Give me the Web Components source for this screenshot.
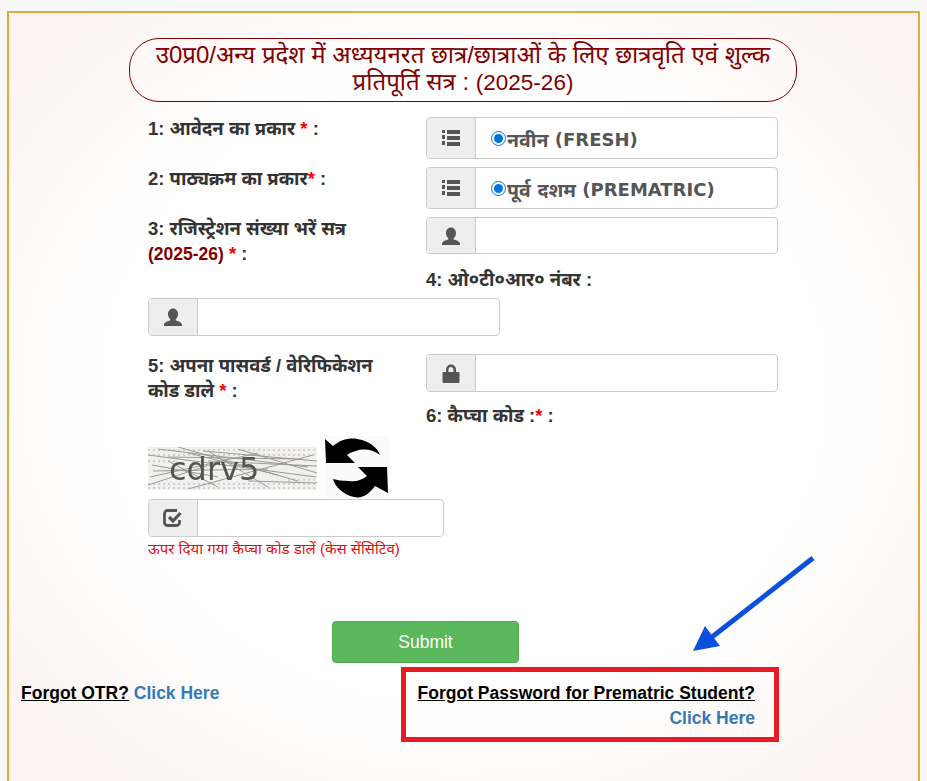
<!DOCTYPE html>
<html lang="hi">
<head>
<meta charset="utf-8">
<title>छात्रवृत्ति लॉगिन</title>
<style>
  html, body { margin: 0; padding: 0; }
  body {
    background: #f8f8f8;
    font-family: "Liberation Sans", "Noto Sans", sans-serif;
    height: 781px;
    overflow: hidden;
  }
</style>
</head>
<body>

<template id="tpl-panel">
  <style>
    :host {
      display: block;
      position: relative;
      box-sizing: border-box;
      margin: 11px 7px 0 7px;
      height: 790px;
      border: 2px solid #e3a93a;
      background:
        radial-gradient(ellipse 66% 66% at 50% 48%, #ffffff 60%, rgba(255,255,255,0) 100%),
        #fdf3f1;
      padding: 25px 12px 0 12px;
    }
    .arrow { position: absolute; left: 681px; top: 542px; }
  </style>
  <slot></slot>
  <svg class="arrow" width="126" height="100" viewBox="0 0 126 100">
    <path d="M123 3L22 82" stroke="#0a50dc" stroke-width="5" fill="none"/>
    <path d="M3 96L15 71 30 91Z" fill="#0a50dc"/>
  </svg>
</template>

<template id="tpl-heading">
  <style>
    :host {
      display: block;
      box-sizing: border-box;
      width: 668px;
      height: 64px;
      margin: 0 0 15px 108px;
      border: 1px solid #800000;
      border-radius: 30px;
      color: #800000;
      font-size: 24px;
      line-height: 27px;
      text-align: center;
      padding: 2px 20px 0;
    }
    ::slotted(span) { font-size: 22.5px; }
  </style>
  <slot></slot>
</template>

<template id="tpl-fields">
  <style>
    :host { display: block; margin-left: 127px; }
  </style>
  <slot></slot>
</template>

<template id="tpl-row">
  <style>
    :host {
      display: grid;
      grid-template-columns: 278px 352px;
      align-items: start;
    }
  </style>
  <slot></slot>
</template>

<template id="tpl-label">
  <style>
    :host {
      display: block;
      color: #333;
      font-size: 18.5px;
      font-weight: bold;
      line-height: 25px;
      margin-top: -1px;
      padding: 0 38px 1px 0;
    }
    ::slotted(b) { color: #f00; }
    ::slotted(i) { color: #800000; font-style: normal; font-size: 17.5px; }
  </style>
  <slot></slot>
</template>

<template id="tpl-group">
  <style>
    :host {
      display: flex;
      box-sizing: border-box;
      height: var(--h, 38px);
      width: var(--w, 352px);
      border: 1px solid #ccc;
      border-radius: 4px;
      background: #fff;
      overflow: hidden;
    }
    .addon {
      flex: 0 0 48px;
      display: flex;
      align-items: center;
      justify-content: center;
      background: #eee;
      border-right: 1px solid #ccc;
      color: #555;
    }
    .body {
      flex: 1;
      display: flex;
      align-items: center;
      padding-left: 15px;
      min-width: 0;
    }
    svg { width: 18px; height: 18px; fill: currentColor; display: block; overflow: visible; }
    input {
      border: 0;
      outline: 0;
      background: transparent;
      width: 100%;
      height: 100%;
      font: inherit;
    }
    label {
      display: flex;
      align-items: center;
      padding-top: 2px;
      color: #555;
      font-size: 18px;
      font-weight: bold;
      font-family: "DejaVu Sans", "Noto Sans", sans-serif;
      white-space: pre;
    }
    label span { font-size: 19.5px; }
    label input[type=radio] {
      width: 15px;
      height: 15px;
      margin: 0 1px 0 0;
      accent-color: #0075d9;
      position: relative;
      top: -1px;
    }
  </style>
  <div class="addon" id="addon"></div>
  <div class="body" id="body"></div>
</template>

<template id="tpl-captcha">
  <style>
    :host { display: flex; align-items: flex-end; gap: 8px; height: 62px; }
    svg { display: block; }
    text { font-family: "DejaVu Sans", sans-serif; }
  </style>
  <svg width="169" height="43" viewBox="0 0 169 43" style="margin-bottom:8px">
    <defs><filter id="soft"><feGaussianBlur stdDeviation="0.45"/></filter></defs>
    <rect width="169" height="43" fill="#f1f0ee"/>
    <g filter="url(#soft)">
      <g stroke="#d2d1cd" stroke-width="2" stroke-dasharray="2 3" fill="none">
        <path d="M0 3H169M0 8H169M0 37H169M0 41H169M0 14H30M140 33H169"/>
      </g>
      <g stroke="#9a9a96" stroke-width="1" fill="none">
        <path d="M0 8L168 30M10 2L160 20M30 0L150 34M55 4L169 14M2 30L110 6M0 38L80 12M40 42L165 8M90 2L169 26M70 40L20 14M120 40L60 4M4 18L70 30M100 34L169 36M20 10L150 12M60 14L169 19M5 24L120 22M40 6L130 28"/>
      </g>
      <text x="21" y="33" font-size="32" fill="#55554f">cdrv5</text>
    </g>
  </svg>
  <svg width="64" height="62" viewBox="5 5 64 62">
    <rect x="5" y="5" width="64" height="62" fill="#fafafa"/>
    <path d="M5 8L13 15C22 7 33 6 42 9C52 12 58 18 60 24C54 19 44 17 36 20C32 21 29 22 27 24L35 32L6 32Z" fill="#000"/>
    <path d="M68 62L67 36L38 36L47 45C42 49 36 51 29 50C22 50 17 49 13 48C15 56 24 64 34 66C43 68 50 62 55 55Z" fill="#000"/>
  </svg>
</template>

<template id="tpl-help">
  <style>
    :host {
      display: block;
      margin-top: 3px;
      color: #e01010;
      font-size: 15px;
      line-height: 18px;
    }
  </style>
  <slot></slot>
</template>

<template id="tpl-submit">
  <style>
    :host { display: block; margin: 63px 0 0 184px; }
    button {
      display: block;
      width: 187px;
      height: 42px;
      background: #5cb85c;
      border: 1px solid #4cae4c;
      border-radius: 4px;
      color: #fff;
      font: 17.5px "Liberation Sans", sans-serif;
      padding: 0;
    }
  </style>
  <button type="button"><slot></slot></button>
</template>

<template id="tpl-footer">
  <style>
    :host {
      display: grid;
      grid-template-columns: 380px 378px;
      margin-top: 4px;
      align-items: start;
    }
  </style>
  <slot></slot>
</template>

<template id="tpl-forgot">
  <style>
    :host {
      display: block;
      font-size: 17.5px;
      font-weight: bold;
      line-height: 25px;
      padding-top: 14px;
    }
    :host([boxed]) {
      box-sizing: border-box;
      height: 75px;
      border: 5px solid #e61b23;
      padding: 9px 19px 0 0;
      text-align: right;
    }
    ::slotted(u) { color: #000; }
    ::slotted(a) { color: #337ab7; text-decoration: none; }
  </style>
  <slot></slot>
</template>

<script>
  const ICONS = {
    list: '<path d="M0 1h3v3H0zM5 1h13v4H5zM0 6h3v4H0zM5 7h13v4H5zM0 12h3v4H0zM5 13h13v4H5z"/>',
    user: '<path d="M9 .5c3.200 0 5 2.500 5 5.500 0 2.300-.9 4.200-2.300 5.200v1.300c3 .8 6.300 2 6.300 4.500v1H0v-1c0-2.500 3.300-3.700 6.300-4.500v-1.300C4.900 10.200 4 8.300 4 6c0-3 1.800-5.500 5-5.500z"/>',
    lock: '<path d="M4 8V5.500a5 5 0 0 1 10 0V8h2.500c.5 0 1 .5 1 1v9c0 .5-.5 1-1 1h-15c-.5 0-1-.5-1-1V9c0-.5.5-1 1-1zm2.500 0h5V5.500a2.500 2.500 0 0 0-5 0z"/>',
    check: '<path d="M15.500 11v2.500a3 3 0 0 1-3 3h-9a3 3 0 0 1-3-3v-9a3 3 0 0 1 3-3H13" fill="none" stroke="currentColor" stroke-width="2.800"/><path d="M5 8L9 12 16.500 4" fill="none" stroke="currentColor" stroke-width="3.200"/>'
  };

  class BasicBox extends HTMLElement {
    constructor() {
      super();
      const tpl = document.getElementById(this.constructor.tpl);
      this.attachShadow({ mode: 'open' }).appendChild(tpl.content.cloneNode(true));
    }
  }
  class FormPanel extends BasicBox { static tpl = 'tpl-panel'; }
  class FormHeading extends BasicBox { static tpl = 'tpl-heading'; }
  class FormFields extends BasicBox { static tpl = 'tpl-fields'; }
  class FormRow extends BasicBox { static tpl = 'tpl-row'; }
  class FieldLabel extends BasicBox { static tpl = 'tpl-label'; }
  class CaptchaImage extends BasicBox { static tpl = 'tpl-captcha'; }
  class HelpText extends BasicBox { static tpl = 'tpl-help'; }
  class SubmitButton extends BasicBox { static tpl = 'tpl-submit'; }
  class FormFooter extends BasicBox { static tpl = 'tpl-footer'; }
  class ForgotLink extends BasicBox { static tpl = 'tpl-forgot'; }

  // input-group: icono a la izquierda y campo o radio a la derecha
  class InputGroup extends BasicBox {
    static tpl = 'tpl-group';
    connectedCallback() {
      const root = this.shadowRoot;
      root.getElementById('addon').innerHTML =
        `<svg viewBox="0 0 18 18">${ICONS[this.getAttribute('icon')]}</svg>`;
      const radio = this.getAttribute('radio');
      root.getElementById('body').innerHTML = radio
        ? `<label><input type="radio" checked><span>${radio}</span> ${this.getAttribute('radio-en')}</label>`
        : '<input type="text">';
    }
  }

  customElements.define('form-panel', FormPanel);
  customElements.define('form-heading', FormHeading);
  customElements.define('form-fields', FormFields);
  customElements.define('form-row', FormRow);
  customElements.define('field-label', FieldLabel);
  customElements.define('captcha-image', CaptchaImage);
  customElements.define('help-text', HelpText);
  customElements.define('submit-button', SubmitButton);
  customElements.define('form-footer', FormFooter);
  customElements.define('forgot-link', ForgotLink);
  customElements.define('input-group', InputGroup);
</script>

<form-panel>
  <form-heading>उ0प्र0/अन्य प्रदेश में अध्ययनरत छात्र/छात्राओं के लिए छात्रवृति एवं शुल्क<br>प्रतिपूर्ति सत्र : <span>(2025-26)</span></form-heading>

  <form-fields>
    <form-row style="margin-bottom:8px">
      <field-label>1: आवेदन का प्रकार <b>*</b> :</field-label>
      <input-group icon="list" radio="नवीन" radio-en="(FRESH)" style="--h:42px"></input-group>
    </form-row>
    <form-row style="margin-bottom:8px">
      <field-label>2: पाठ्यक्रम का प्रकार<b>*</b> :</field-label>
      <input-group icon="list" radio="पूर्व दशम" radio-en="(PREMATRIC)" style="--h:42px"></input-group>
    </form-row>
    <form-row>
      <field-label>3: रजिस्ट्रेशन संख्या भरें सत्र<br><i>(2025-26)</i> <b>*</b> :</field-label>
      <input-group icon="user" style="--h:37px"></input-group>
    </form-row>
    <form-row style="margin-bottom:5px">
      <div></div>
      <field-label>4: ओ०टी०आर० नंबर :</field-label>
    </form-row>
    <input-group icon="user" style="margin-bottom:18px"></input-group>
    <form-row style="height:50px">
      <field-label>5: अपना पासवर्ड / वेरिफिकेशन<br>कोड डाले <b>*</b> :</field-label>
      <input-group icon="lock"></input-group>
    </form-row>
    <form-row style="margin-bottom:7px">
      <div></div>
      <field-label>6: कैप्चा कोड :<b>*</b> :</field-label>
    </form-row>
    <captcha-image style="margin-bottom:1px"></captcha-image>
    <input-group icon="check" style="--w:296px"></input-group>
    <help-text>ऊपर दिया गया कैप्चा कोड डालें (केस सेंसिटिव)</help-text>
    <submit-button>Submit</submit-button>
  </form-fields>

  <form-footer>
    <forgot-link><u>Forgot OTR?</u> <a href="#">Click Here</a></forgot-link>
    <forgot-link boxed><u>Forgot Password for Prematric Student?</u><br><a href="#">Click Here</a></forgot-link>
  </form-footer>
</form-panel>

</body>
</html>
